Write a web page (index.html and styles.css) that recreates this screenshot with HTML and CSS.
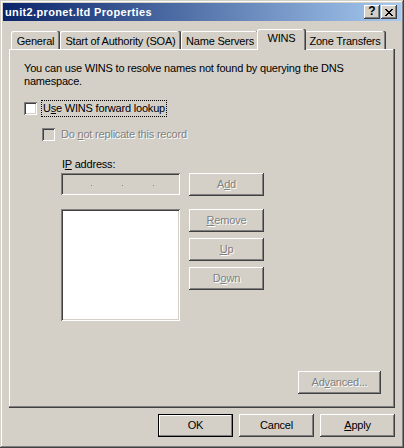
FILE: index.html
```html
<!DOCTYPE html>
<html>
<head>
<meta charset="utf-8">
<link rel="stylesheet" href="styles.css">
</head>
<body>
<div class="window">
  <div class="titlebar">
    <span class="title">unit2.pronet.ltd Properties</span>
    <span class="cbtn help">?</span>
    <span class="cbtn close"><svg viewBox="0 0 8 7" shape-rendering="crispEdges"><path fill="#000" d="M0 0h2v1H0zM6 0h2v1H6zM1 1h2v1H1zM5 1h2v1H5zM2 2h4v1H2zM3 3h2v1H3zM2 4h4v1H2zM1 5h2v1H1zM5 5h2v1H5zM0 6h2v1H0zM6 6h2v1H6z"/></svg></span>
  </div>
  <div class="client">
    <div class="tabs">
      <div class="tab t-general">General</div>
      <div class="tab t-soa">Start of Authority (SOA)</div>
      <div class="tab t-ns">Name Servers</div>
      <div class="tab t-wins sel">WINS</div>
      <div class="tab t-zone">Zone Transfers</div>
    </div>
    <div class="panel">
      <p class="desc">You can use WINS to resolve names not found by querying the DNS<br>namespace.</p>
      <div class="check-row">
        <span class="cb"></span>
        <span class="label focus">U<u>s</u>e WINS forward lookup</span>
      </div>
      <div class="check-row sub">
        <span class="cb dis"></span>
        <span class="label distext">Do <u>n</u>ot replicate this record</span>
      </div>
      <div class="ip-section">
        <div class="ip-label">I<u>P</u> address:</div>
        <div class="ip-grid">
          <div class="ip-field"><i class="dot"></i><i class="dot"></i><i class="dot"></i></div>
          <div class="btn distext">A<u>d</u>d</div>
          <div class="listbox"></div>
          <div class="btn-col">
            <div class="btn distext"><u>R</u>emove</div>
            <div class="btn distext"><u>U</u>p</div>
            <div class="btn distext">D<u>o</u>wn</div>
          </div>
        </div>
      </div>
      <div class="btn adv distext">Ad<u>v</u>anced...</div>
    </div>
    <div class="dlg-buttons">
      <div class="btn default">OK</div>
      <div class="btn">Cancel</div>
      <div class="btn"><u>A</u>pply</div>
    </div>
  </div>
</div>
</body>
</html>
```
FILE: styles.css
```css
body {
  margin: 0;
  background: #d4d0c8;
  font-family: "Liberation Sans", Arial, sans-serif;
  font-size: 11px;
  line-height: 13px;
  color: #000;
  letter-spacing: -0.2px;
}

.window {
  width: 404px;
  height: 448px;
  box-sizing: border-box;
  padding: 3px;
  background: #d4d0c8;
  box-shadow: inset -1px -1px #404040, inset 1px 1px #d4d0c8, inset -2px -2px #808080, inset 2px 2px #fff;
  display: flex;
  flex-direction: column;
}

.titlebar {
  height: 18px;
  display: flex;
  align-items: center;
  padding: 0 4px 0 2px;
  background: linear-gradient(to right, #0a246a, #a6caf0);
}

.title {
  flex: 1;
  color: #fff;
  font-weight: bold;
  letter-spacing: 0.35px;
  white-space: nowrap;
}

.cbtn {
  width: 16px;
  height: 14px;
  box-sizing: border-box;
  background: #d4d0c8;
  box-shadow: inset -1px -1px #404040, inset 1px 1px #fff, inset -2px -2px #808080;
  display: flex;
  align-items: center;
  justify-content: center;
}

.help {
  font-weight: bold;
  font-size: 12px;
  letter-spacing: 0;
  margin-right: 1px;
  padding-bottom: 1px;
}

.close svg {
  width: 8px;
  height: 7px;
  display: block;
  margin-left: -1px;
}

.client {
  flex: 1;
  padding: 8px 6px 0;
  display: flex;
  flex-direction: column;
}

.tabs {
  display: flex;
  align-items: flex-end;
  height: 20px;
  padding-left: 2px;
}

.tab {
  height: 18px;
  box-sizing: border-box;
  padding-top: 4px;
  text-align: center;
  white-space: nowrap;
  background: #d4d0c8;
  border-radius: 2px 2px 0 0;
  box-shadow: inset -1px 0 #404040, inset -2px 0 #808080, inset 1px 1px #fff;
}

.t-general { width: 49px; }
.t-soa { width: 121px; }
.t-ns { width: 78px; }
.t-wins { width: 45px; }
.t-zone { width: 82px; }

.tab.sel {
  width: 49px;
  height: 21px;
  margin: 0 -2px -1px;
  padding-top: 3px;
  position: relative;
  z-index: 1;
}

.panel {
  height: 359px;
  box-sizing: border-box;
  padding: 13px 0 0 15px;
  box-shadow: inset -1px -1px #404040, inset -2px -2px #808080, inset 1px 1px #fff;
  display: flex;
  flex-direction: column;
  align-items: flex-start;
}

.desc {
  margin: 0;
  white-space: nowrap;
}

.check-row {
  display: flex;
  align-items: center;
  gap: 4px;
  margin-top: 12px;
}

.check-row.sub {
  margin-top: 9px;
  padding-left: 18px;
}

.cb {
  width: 13px;
  height: 13px;
  box-sizing: border-box;
  flex: none;
  background: #fff;
  box-shadow: inset 1px 1px #808080, inset -1px -1px #fff, inset 2px 2px #404040, inset -2px -2px #d4d0c8;
}

.cb.dis {
  background: #d4d0c8;
}

.label {
  padding: 1px;
  border: 1px solid transparent;
  white-space: nowrap;
}

.label.focus {
  border: 1px dotted #000;
}

.distext {
  color: #808080;
  text-shadow: 1px 1px #fff;
}

.ip-section {
  margin-top: 15px;
  margin-left: 37px;
}

.ip-label {
  margin-left: 1px;
  margin-bottom: 2px;
}

.ip-grid {
  display: grid;
  grid-template-columns: 119px 75px;
  grid-template-rows: 23px 112px;
  column-gap: 9px;
  row-gap: 13px;
}

.ip-field {
  height: 22px;
  box-sizing: border-box;
  background: #d4d0c8;
  box-shadow: inset 1px 1px #808080, inset -1px -1px #fff, inset 2px 2px #404040, inset -2px -2px #d4d0c8;
  display: flex;
  align-items: flex-start;
  gap: 30px;
  padding: 12px 0 0 30px;
}

.dot {
  width: 1px;
  height: 1px;
  background: #808080;
}

.listbox {
  background: #fff;
  box-shadow: inset 1px 1px #808080, inset -1px -1px #fff, inset 2px 2px #404040, inset -2px -2px #d4d0c8;
}

.btn-col {
  display: flex;
  flex-direction: column;
  gap: 6px;
}

.btn {
  width: 75px;
  height: 23px;
  box-sizing: border-box;
  display: flex;
  align-items: center;
  justify-content: center;
  white-space: nowrap;
  background: #d4d0c8;
  box-shadow: inset -1px -1px #404040, inset 1px 1px #fff, inset -2px -2px #808080;
}

.btn.default {
  border: 1px solid #000;
  box-shadow: inset -1px -1px #808080, inset 1px 1px #fff;
}

.adv {
  width: 83px;
  margin-top: auto;
  align-self: flex-end;
  margin-right: 14px;
  margin-bottom: 14px;
}

.dlg-buttons {
  display: flex;
  justify-content: flex-end;
  gap: 6px;
  margin-top: 6px;
}
```
